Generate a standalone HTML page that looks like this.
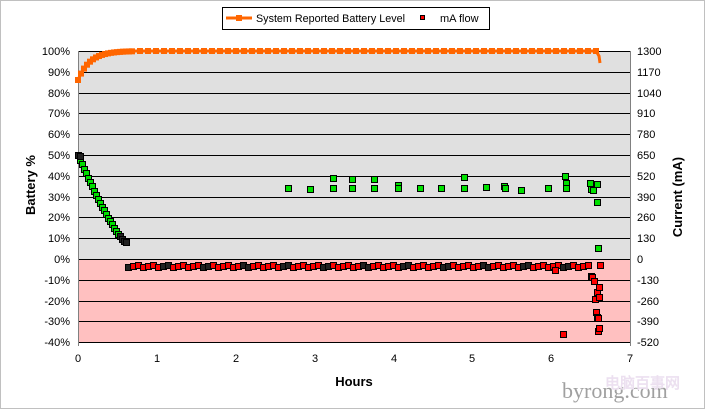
<!DOCTYPE html>
<html><head><meta charset="utf-8"><style>
html,body{margin:0;padding:0;background:#fff;}
svg{display:block;font-family:"Liberation Sans",Arial,sans-serif;}
</style></head><body>
<svg id="s" width="705" height="409" viewBox="0 0 705 409">
<rect x="0.5" y="0.5" width="704" height="408" fill="#fff" stroke="#c0c0c0"/>
<rect x="78" y="51" width="552" height="208" fill="#e0e0e0"/>
<rect x="78" y="259" width="552" height="83" fill="#ffc0c0"/>
<g stroke="#000" stroke-width="1">
<line x1="78" y1="51.5" x2="630" y2="51.5"/><line x1="78" y1="72.5" x2="630" y2="72.5"/>
<line x1="78" y1="93.5" x2="630" y2="93.5"/><line x1="78" y1="113.5" x2="630" y2="113.5"/>
<line x1="78" y1="134.5" x2="630" y2="134.5"/><line x1="78" y1="155.5" x2="630" y2="155.5"/>
<line x1="78" y1="176.5" x2="630" y2="176.5"/><line x1="78" y1="197.5" x2="630" y2="197.5"/>
<line x1="78" y1="217.5" x2="630" y2="217.5"/><line x1="78" y1="238.5" x2="630" y2="238.5"/>
<line x1="78" y1="259.5" x2="630" y2="259.5"/><line x1="78" y1="280.5" x2="630" y2="280.5"/>
<line x1="78" y1="301.5" x2="630" y2="301.5"/><line x1="78" y1="321.5" x2="630" y2="321.5"/>
<line x1="78" y1="342.5" x2="630" y2="342.5"/>
<line x1="78.5" y1="51" x2="78.5" y2="346" stroke="#808080"/>
<line x1="630.5" y1="51" x2="630.5" y2="346" stroke="#808080"/>
</g>
<g font-size="11" fill="#000" text-anchor="end">
<text x="70" y="55">100%</text><text x="70" y="76">90%</text><text x="70" y="97">80%</text>
<text x="70" y="117">70%</text><text x="70" y="138">60%</text><text x="70" y="159">50%</text>
<text x="70" y="180">40%</text><text x="70" y="201">30%</text><text x="70" y="221">20%</text>
<text x="70" y="242">10%</text><text x="70" y="263">0%</text><text x="70" y="284">-10%</text>
<text x="70" y="305">-20%</text><text x="70" y="325">-30%</text><text x="70" y="346">-40%</text>
</g>
<g font-size="11" fill="#000" text-anchor="start">
<text x="637" y="55">1300</text><text x="637" y="76">1170</text><text x="637" y="97">1040</text>
<text x="637" y="117">910</text><text x="637" y="138">780</text><text x="637" y="159">650</text>
<text x="637" y="180">520</text><text x="637" y="201">390</text><text x="637" y="221">260</text>
<text x="637" y="242">130</text><text x="637" y="263">0</text><text x="637" y="284">-130</text>
<text x="637" y="305">-260</text><text x="637" y="325">-390</text><text x="637" y="346">-520</text>
</g>
<g font-size="11" text-anchor="middle">
<text x="78" y="362">0</text><text x="157" y="362">1</text><text x="236" y="362">2</text>
<text x="315" y="362">3</text><text x="394" y="362">4</text><text x="472" y="362">5</text>
<text x="551" y="362">6</text><text x="630" y="362">7</text>
</g>
<text x="354" y="386" font-size="13" font-weight="bold" text-anchor="middle">Hours</text>
<text transform="translate(35,185) rotate(-90)" font-size="13" font-weight="bold" text-anchor="middle">Battery %</text>
<text transform="translate(682,197) rotate(-90)" font-size="13" font-weight="bold" text-anchor="middle">Current (mA)</text>
<rect x="222.5" y="7.5" width="267" height="22" fill="#fff" stroke="#000"/>
<line x1="226" y1="18" x2="252" y2="18" stroke="#ff6600" stroke-width="3"/>
<rect x="236" y="15" width="6" height="6" fill="#ff6600"/>
<text x="256" y="22" font-size="11" textLength="149" lengthAdjust="spacingAndGlyphs">System Reported Battery Level</text>
<rect x="420.5" y="15.5" width="4" height="4" fill="#ff0000" stroke="#000"/>
<text x="440" y="22" font-size="11">mA flow</text>
<text x="562" y="398" font-size="22" font-family="Liberation Serif,serif" fill="#a0a0a0">byrong.com</text>
<text x="605" y="388" font-size="15" fill="#ece0f0" font-weight="bold">电脑百事网</text>
<g id="g"></g>
</svg>
<script>
var g=document.getElementById('g'),h='';
var pts=[];for(var x=78;x<=597;x+=2){var y=x<130?51+29*Math.exp(-(x-78)/12):51;pts.push(x+','+y.toFixed(1));}
pts.push('599,56','600,63');
h+='<polyline points="'+pts.join(' ')+'" fill="none" stroke="#ff6600" stroke-width="3"/>';
for(var x=78;x<=132;x+=3){var y=51+29*Math.exp(-(x-78)/12);h+='<rect x="'+(x-3)+'" y="'+(y-3)+'" width="6" height="6" fill="#ff6600"/>';}
for(var x=140;x<597;x+=8)h+='<rect x="'+(x-3)+'" y="48" width="6" height="6" fill="#ff6600"/>';
function m(x,y,c){h+='<rect x="'+(x-3)+'.5" y="'+(y-3)+'.5" width="6" height="6" fill="'+c+'" stroke="#000"/>';}
for(var i=0;i<=24;i++){var x=78+i*2;var t=i/24;var y=155+87*(1-Math.pow(1-t,1.3));m(x,Math.round(y),i>20?'#222':'#00e000');}
m(78,155,'#222');m(80,156,'#222');
var gr=[[288,188],[310,189],[333,178],[333,188],[352,179],[352,188],[374,179],[374,188],[398,185],[398,188],[420,188],[441,188],[464,177],[464,188],[486,187],[504,186],[505,188],[521,190],[548,188],[565,176],[566,183],[566,188],[590,183],[591,189],[593,190],[597,184],[597,202],[598,248]];
gr.forEach(function(p){m(p[0],p[1],'#00e000');});
for(var x=128;x<=592;x+=5){var y=266+((x*7)%3)-1;m(x,y,(x%40<12)?'#222':'#ff0000');}
[[555,270],[563,334],[591,276],[592,277],[594,281],[595,299],[596,312],[597,317],[598,318],[598,331],[600,265],[597,292],[599,287],[599,297],[599,328]].forEach(function(p){m(p[0],p[1],'#ff0000');});
g.innerHTML=h;
</script>
</body></html>
